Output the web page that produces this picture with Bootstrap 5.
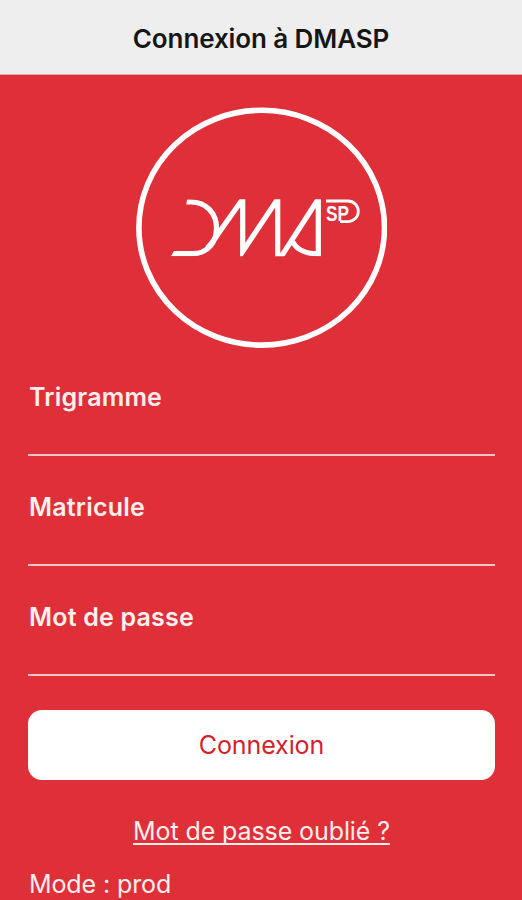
<!DOCTYPE html>
<html lang="fr">
<head>
<meta charset="utf-8">
<meta name="viewport" content="width=device-width, initial-scale=1">
<title>Connexion à DMASP</title>
<link href="https://cdn.jsdelivr.net/npm/bootstrap@5.3.0/dist/css/bootstrap.min.css" rel="stylesheet">
<style>
body { background: #df2f38; font-family: Inter, "Liberation Sans", sans-serif; font-size: 26px; line-height: 32px; color: #fff0ee; height: 900px; }
.topbar { height: 75px; padding-top: 3px; background: #eee; color: #161616; border-bottom: 1px solid #e6a5a8; }
.title { font-size: 26px; font-weight: 600; line-height: 32px; letter-spacing: -.1px; }
.logo { width: 252px; height: 242px; margin-top: 32px; }
.login { padding: 0 27px 0 28px; margin-top: 32px; }
.field { height: 110px; }
.field label { font-weight: 600; font-size: 25px; letter-spacing: .2px; padding-left: 1px; line-height: 32px; }
.field .form-control { height: 43px; border-bottom: 2px solid #fbc4c4 !important; color: #fff; }
.submit { height: 70px; margin-top: -1px; border-radius: 14px; font-size: 25px; letter-spacing: -.1px; color: #d3222b; background: #fff; }
.submit.btn { padding: 2px 0 0; }
.forgot { color: #fff0ee; font-size: 25px; letter-spacing: -.1px; text-underline-offset: 3px; text-decoration-thickness: 2px; text-decoration-skip-ink: none; margin-top: 35px; }
.mode { font-size: 25px; letter-spacing: -.1px; margin-top: 21px; padding-left: 1px; }
</style>
</head>
<body class="overflow-hidden">
<header class="topbar d-flex align-items-center justify-content-center"><h1 class="title mb-0">Connexion à DMASP</h1></header>
<main>
<svg class="logo d-block mx-auto" viewBox="135 107 252 242" role="img" aria-label="DMA SP">
<defs><clipPath id="band"><path d="M187 199.300H324V256.300H171L174 251L183 230Z"/></clipPath></defs>
<ellipse cx="261.700" cy="227.700" rx="122.800" ry="117.400" fill="none" stroke="#fff" stroke-width="5.600"/>
<g fill="none" stroke="#fff" stroke-width="5.200" stroke-miterlimit="10" clip-path="url(#band)">
<path d="M170 253.700H192C208 253.700 216.500 242 216.500 228C216.500 213 206 202 191 202H183"/>
<path d="M207 248C211 245 214 240 218 234L242.700 199V251.500L277.700 199V260H279L318.300 199V253.800C304 253.800 295 249 291.500 239"/>
</g>
<path d="M326 201H348A10.300 10.300 0 0 1 348 221.600H340" fill="none" stroke="#fff" stroke-width="2.800"/>
<text x="326" y="220.800" fill="#fff" font-family="Liberation Sans, sans-serif" font-weight="700" font-size="21.500" textLength="23" lengthAdjust="spacingAndGlyphs">SP</text>
</svg>
<form class="login" onsubmit="return false">
<div class="field"><label class="d-block" for="tri">Trigramme</label><input id="tri" class="form-control bg-transparent border-0 rounded-0 shadow-none p-0" type="text"></div>
<div class="field"><label class="d-block" for="mat">Matricule</label><input id="mat" class="form-control bg-transparent border-0 rounded-0 shadow-none p-0" type="text"></div>
<div class="field"><label class="d-block" for="pwd">Mot de passe</label><input id="pwd" class="form-control bg-transparent border-0 rounded-0 shadow-none p-0" type="password"></div>
<button class="submit btn w-100 border-0 d-block" type="submit">Connexion</button>
<a class="forgot d-block text-center" href="#">Mot de passe oublié ?</a>
<p class="mode mb-0">Mode : prod</p>
</form>
</main>
<script src="https://cdn.jsdelivr.net/npm/bootstrap@5.3.0/dist/js/bootstrap.bundle.min.js"></script>
</body>
</html>
